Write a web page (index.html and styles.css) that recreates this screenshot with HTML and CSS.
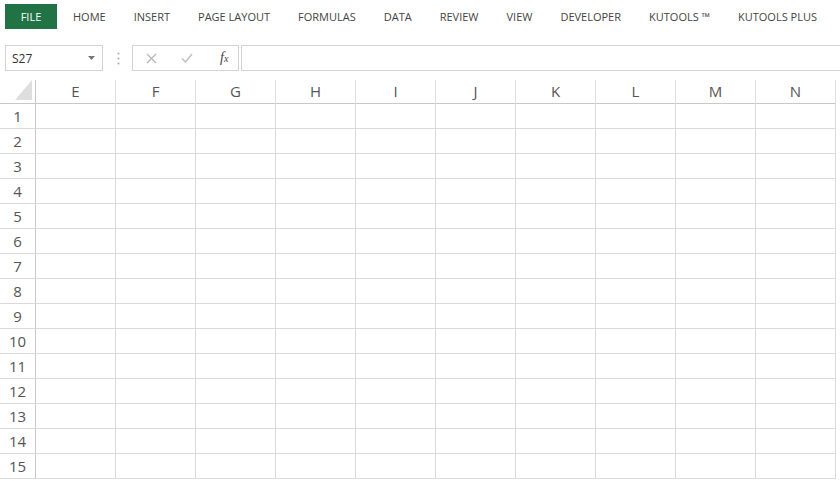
FILE: index.html
```html
<!DOCTYPE html>
<html lang="en">
<head>
  <meta charset="UTF-8">
  <title>Book1 - Excel</title>
  <link rel="stylesheet" href="styles.css">
</head>

<body>
  <!-- ribbon tabs -->
  <div class="tabs">
    <div class="tab tab-file">FILE</div>
    <div class="tab">HOME</div>
    <div class="tab">INSERT</div>
    <div class="tab">PAGE LAYOUT</div>
    <div class="tab">FORMULAS</div>
    <div class="tab">DATA</div>
    <div class="tab">REVIEW</div>
    <div class="tab">VIEW</div>
    <div class="tab">DEVELOPER</div>
    <div class="tab">KUTOOLS &trade;</div>
    <div class="tab">KUTOOLS PLUS</div>
  </div>

  <!-- name box + formula bar -->
  <div class="formula-bar">
    <div class="name-box">
      <span>S27</span>
      <svg class="arrow" width="7" height="4" viewBox="0 0 7 4"><path d="M0 0h7L3.5 4z" fill="#777"/></svg>
    </div>
    <div class="grip">
      <svg width="3" height="13" viewBox="0 0 3 13"><circle cx="1.5" cy="1.5" r="1" fill="#aaa"/><circle cx="1.5" cy="6.5" r="1" fill="#aaa"/><circle cx="1.5" cy="11.5" r="1" fill="#aaa"/></svg>
    </div>
    <div class="fx-buttons">
      <svg width="11" height="11" viewBox="0 0 11 11"><path d="M1 1l9 9M10 1l-9 9" stroke="#b5b5b5" stroke-width="1.2"/></svg>
      <svg width="12" height="10" viewBox="0 0 12 10"><path d="M1 5.5l3.5 3.5L11 1" stroke="#c2c2c2" stroke-width="1.6" fill="none"/></svg>
      <span class="fx">f<sub>x</sub></span>
    </div>
    <div class="formula-input"></div>
  </div>

  <!-- sheet -->
  <table class="sheet">
    <thead>
      <tr>
        <th class="corner"><div class="corner-inner"><svg width="17" height="20" viewBox="0 0 17 20"><path d="M17 0V20H0z" fill="#dedede"/></svg></div></th>
        <th>E</th><th>F</th><th>G</th><th>H</th><th>I</th><th>J</th><th>K</th><th>L</th><th>M</th><th>N</th>
      </tr>
    </thead>
    <tbody>
      <tr><th>1</th><td></td><td></td><td></td><td></td><td></td><td></td><td></td><td></td><td></td><td></td></tr>
      <tr><th>2</th><td></td><td></td><td></td><td></td><td></td><td></td><td></td><td></td><td></td><td></td></tr>
      <tr><th>3</th><td></td><td></td><td></td><td></td><td></td><td></td><td></td><td></td><td></td><td></td></tr>
      <tr><th>4</th><td></td><td></td><td></td><td></td><td></td><td></td><td></td><td></td><td></td><td></td></tr>
      <tr><th>5</th><td></td><td></td><td></td><td></td><td></td><td></td><td></td><td></td><td></td><td></td></tr>
      <tr><th>6</th><td></td><td></td><td></td><td></td><td></td><td></td><td></td><td></td><td></td><td></td></tr>
      <tr><th>7</th><td></td><td></td><td></td><td></td><td></td><td></td><td></td><td></td><td></td><td></td></tr>
      <tr><th>8</th><td></td><td></td><td></td><td></td><td></td><td></td><td></td><td></td><td></td><td></td></tr>
      <tr><th>9</th><td></td><td></td><td></td><td></td><td></td><td></td><td></td><td></td><td></td><td></td></tr>
      <tr><th>10</th><td></td><td></td><td></td><td></td><td></td><td></td><td></td><td></td><td></td><td></td></tr>
      <tr><th>11</th><td></td><td></td><td></td><td></td><td></td><td></td><td></td><td></td><td></td><td></td></tr>
      <tr><th>12</th><td></td><td></td><td></td><td></td><td></td><td></td><td></td><td></td><td></td><td></td></tr>
      <tr><th>13</th><td></td><td></td><td></td><td></td><td></td><td></td><td></td><td></td><td></td><td></td></tr>
      <tr><th>14</th><td></td><td></td><td></td><td></td><td></td><td></td><td></td><td></td><td></td><td></td></tr>
      <tr><th>15</th><td></td><td></td><td></td><td></td><td></td><td></td><td></td><td></td><td></td><td></td></tr>
    </tbody>
  </table>
</body>
</html>
```

FILE: styles.css
```css
body {
  font-family: "Open Sans", "Noto Sans", sans-serif;
  margin: 0;
  padding: 0;
  background-color: #fff;
  color: #444;
  overflow: hidden;
}

/* Ribbon tabs */
.tabs {
  display: flex;
  padding-top: 4px;
  height: 25px;
}

.tab {
  padding: 0 14px;
  font-size: 11px;
  line-height: 25px;
  color: #444;
  white-space: nowrap;
}

.tab-file {
  width: 52px;
  padding: 0;
  margin: 0 2px 0 5px;
  text-align: center;
  background-color: #217346;
  color: #fff;
}

/* Formula bar */
.formula-bar {
  display: flex;
  align-items: center;
  margin-top: 16px;
  height: 26px;
}

.name-box {
  box-sizing: border-box;
  display: flex;
  align-items: center;
  justify-content: space-between;
  width: 98px;
  height: 26px;
  margin-left: 5px;
  padding: 0 6px;
  border: 1px solid #d4d4d4;
  font-size: 12px;
  color: #333;
}

.name-box .arrow {
  margin-right: 1px;
}

.grip {
  display: flex;
  width: 29px;
  justify-content: center;
  padding-left: 2px;
  box-sizing: border-box;
}

.fx-buttons {
  box-sizing: border-box;
  display: flex;
  align-items: center;
  width: 107px;
  height: 26px;
  padding-left: 13px;
  border: 1px solid #d4d4d4;
}

.fx-buttons svg:nth-child(2) {
  margin-left: 24px;
}

.fx {
  margin-left: 27px;
  font-family: "Liberation Serif", serif;
  font-style: italic;
  font-size: 14px;
  color: #444;
}

.fx sub {
  font-size: 10px;
  vertical-align: 0;
}

.formula-input {
  flex: 1;
  height: 26px;
  margin-left: 2px;
  box-sizing: border-box;
  border: 1px solid #d4d4d4;
  border-right: none;
}

/* Sheet grid */
.sheet {
  margin-top: 9px;
  border-collapse: separate;
  border-spacing: 0;
  table-layout: fixed;
}

.sheet th {
  font-weight: normal;
  font-size: 15px;
  color: #555;
  padding: 0;
}

.sheet thead th {
  width: 79px;
  height: 23px;
  line-height: 23px;
  border-right: 1px solid #e1e1e1;
  border-bottom: 1px solid #c8c8c8;
}

.sheet thead th.corner {
  width: 35px;
  border-right: 1px solid #c8c8c8;
}

.corner-inner {
  display: flex;
  justify-content: flex-end;
  align-items: flex-end;
  height: 23px;
  padding: 0 3px 3px 0;
  box-sizing: border-box;
}

.corner-inner svg {
  display: block;
}

.sheet tbody th {
  width: 35px;
  height: 24px;
  line-height: 24px;
  text-align: center;
  border-right: 1px solid #c8c8c8;
  border-bottom: 1px solid #dadada;
}

.sheet td {
  width: 79px;
  height: 24px;
  padding: 0;
  border-right: 1px solid #dadada;
  border-bottom: 1px solid #dadada;
}
```
